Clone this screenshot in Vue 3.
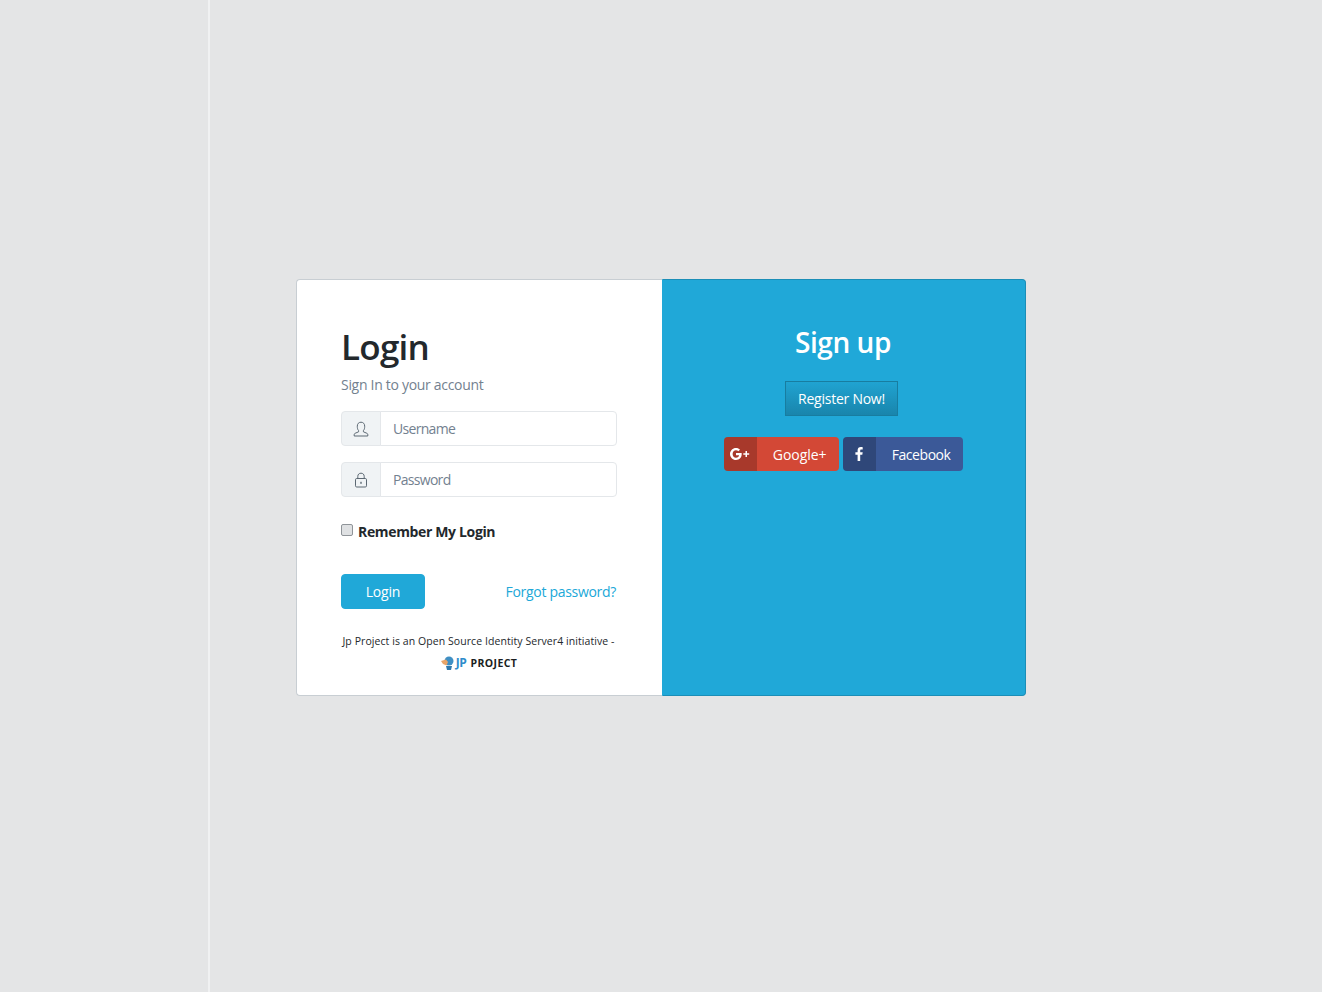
<script setup>
const footerText = 'Jp Project is an Open Source Identity Server4 initiative -'
</script>

<template>
  <div class="page">
    <div class="side-line"></div>
    <div class="card-group">
      <div class="card login-card">
        <h1>Login</h1>
        <p class="muted">Sign In to your account</p>
        <div class="input-group">
          <span class="addon">
            <svg width="16" height="16" viewBox="0 0 16 16" fill="none" stroke="#5c6873" stroke-width="1">
              <path d="M5.6 9.6C4.6 8.6 4.3 7 4.3 5.2 4.3 2.8 5.7 1.2 8 1.2s3.700 1.600 3.700 4c0 1.800-.3 3.400-1.300 4.400v1.200l3.500 1.500c.6.3.9.7.9 1.300v1.400H1.200v-1.400c0-.6.3-1 .9-1.300l3.500-1.500z" />
            </svg>
          </span>
          <input type="text" placeholder="Username" />
        </div>
        <div class="input-group">
          <span class="addon">
            <svg width="16" height="16" viewBox="0 0 16 16" fill="none" stroke="#5c6873" stroke-width="1">
              <rect x="2.500" y="6.500" width="11" height="8.500" rx="1.200" />
              <path d="M4.800 6.500V4.400C4.800 2.400 6.100 1.200 8 1.200s3.200 1.200 3.200 3.200v2.100" />
              <rect x="7.300" y="9.800" width="1.400" height="2" fill="#5c6873" stroke="none" />
            </svg>
          </span>
          <input type="password" placeholder="Password" />
        </div>
        <label class="remember">
          <input type="checkbox" />
          <strong>Remember My Login</strong>
        </label>
        <div class="actions">
          <button class="btn-login">Login</button>
          <a class="forgot">Forgot password?</a>
        </div>
        <div class="credit">
          <span class="credit-text">{{ footerText }}</span>
          <div class="logo">
            <svg width="15" height="14" viewBox="0 0 15 14">
              <circle cx="9" cy="5" r="4.500" fill="#3f8fc4" />
              <path d="M6 10h6l-1 4H7z" fill="#2f78ad" />
              <path d="M1 5l5-1.500 2 2.500-1.500 3.500-3.500-1.500z" fill="#e8a468" />
            </svg>
            <span class="jp">JP</span>
            <span class="project">PROJECT</span>
          </div>
        </div>
      </div>
      <div class="card signup-card">
        <h2>Sign up</h2>
        <button class="btn-register">Register Now!</button>
        <div class="socials">
          <button class="social google">
            <span class="social-icon">
              <svg width="20" height="12" viewBox="0 0 20 12" fill="#fff">
                <path d="M6 5v2.200h3.100C8.900 8.400 7.800 9.800 6 9.800 4.100 9.800 2.600 8.200 2.600 6.100S4.100 2.300 6 2.300c1 0 1.800.4 2.300 1l1.700-1.600C9 .7 7.600 0 6 0 2.700 0 0 2.700 0 6s2.700 6 6 6c3.400 0 5.700-2.400 5.700-5.900 0-.4 0-.8-.1-1.100z" />
                <path d="M15.500 3h1.500v2.200h2.200v1.500H17v2.200h-1.500V6.700h-2.200V5.200h2.200z" />
              </svg>
            </span>
            <span class="social-label">Google+</span>
          </button>
          <button class="social facebook">
            <span class="social-icon">
              <svg width="8" height="14" viewBox="0 0 8 14" fill="#fff">
                <path d="M5.200 14V7.800h2.100l.4-2.500H5.200V3.700c0-.7.2-1.200 1.200-1.200h1.300V.2C7.400.1 6.700 0 5.800 0 3.900 0 2.600 1.200 2.600 3.300v2H.4v2.500h2.200V14z" />
              </svg>
            </span>
            <span class="social-label">Facebook</span>
          </button>
        </div>
      </div>
    </div>
  </div>
</template>

<style>
html, body {
  margin: 0;
  background: #e4e5e6;
}
</style>

<style scoped>
.page {
  position: relative;
  height: 975px;
  padding-bottom: 17px;
  display: flex;
  align-items: center;
  justify-content: center;
  font-family: "Open Sans", "Noto Sans", sans-serif;
  font-size: 14px;
  color: #23282c;
}

.side-line {
  position: absolute;
  left: 208px;
  top: 0;
  width: 2px;
  height: 992px;
  background: #f0f1f2;
}

.card-group {
  display: flex;
  width: 730px;
  height: 417px;
  position: relative;
}

.card {
  box-sizing: border-box;
  border: 1px solid #c8ced3;
}

.login-card {
  width: 366px;
  padding: 45px 46px 0 44px;
  background: #fff;
  border-right: 0;
  border-radius: 4px 0 0 4px;
}

h1 {
  margin: 0;
  font-size: 35px;
  line-height: 44px;
  font-weight: 600;
  letter-spacing: -0.75px;
}

.muted {
  margin: 5px 0 16px;
  font-size: 14px;
  line-height: 21px;
  letter-spacing: -0.3px;
  color: #73818f;
}

.input-group {
  display: flex;
  width: 276px;
  height: 35px;
  margin-bottom: 16px;
}

.addon {
  box-sizing: border-box;
  flex: none;
  width: 40px;
  display: flex;
  align-items: center;
  justify-content: center;
  background: #f0f3f5;
  border: 1px solid #e4e7ea;
  border-radius: 4px 0 0 4px;
}

.input-group input {
  box-sizing: border-box;
  flex: 1;
  min-width: 0;
  margin-left: -1px;
  padding: 0 12px;
  border: 1px solid #e4e7ea;
  border-radius: 0 4px 4px 0;
  font: inherit;
  font-size: 14px;
  letter-spacing: -0.7px;
  outline: none;
}

.input-group input::placeholder {
  color: #73818f;
  opacity: 1;
}

.remember {
  display: flex;
  align-items: flex-start;
  margin-top: 23px;
  height: 21px;
}

.remember input {
  appearance: none;
  box-sizing: border-box;
  width: 12px;
  height: 12px;
  margin: 4px 5px 0 0;
  background: #dfe1e3;
  border: 1px solid #8f9499;
  border-radius: 2px;
}

.remember strong {
  line-height: 21px;
  margin-top: 1px;
  font-weight: 700;
  letter-spacing: -0.35px;
}

.actions {
  display: flex;
  align-items: center;
  justify-content: space-between;
  margin-top: 33px;
}

.btn-login {
  width: 84px;
  height: 35px;
  border: 1px solid #20a8d8;
  border-radius: 4px;
  background: #20a8d8;
  color: #fff;
  font: inherit;
  letter-spacing: -0.2px;
}

.forgot {
  color: #20a8d8;
  letter-spacing: -0.3px;
}

.credit {
  margin-top: 22px;
  text-align: center;
  font-size: 10.500px;
  line-height: 20px;
  white-space: nowrap;
}

.credit-text {
  letter-spacing: 0.07px;
}

.logo {
  display: flex;
  align-items: center;
  justify-content: center;
  gap: 1px;
  height: 14px;
  margin-top: 5px;
}

.jp {
  color: #2f8ccb;
  font-weight: 700;
  font-size: 12px;
  letter-spacing: -0.4px;
  margin-right: 3px;
}

.project {
  font-weight: 700;
  font-size: 10.500px;
  letter-spacing: 0.4px;
  color: #1b1e21;
}

.signup-card {
  width: 364px;
  padding-top: 40px;
  display: flex;
  flex-direction: column;
  align-items: center;
  background: #20a8d8;
  border-color: #1b8eb7;
  border-left-color: #20a8d8;
  border-radius: 0 4px 4px 0;
  color: #fff;
}

h2 {
  margin: 0 0 0 -2px;
  font-size: 28px;
  line-height: 44px;
  font-weight: 600;
  letter-spacing: -0.45px;
}

.btn-register {
  width: 113px;
  height: 35px;
  margin-top: 17px;
  margin-left: -5px;
  border: 1px solid #187da0;
  border-radius: 0;
  background: linear-gradient(#20a3d1, #1985ac);
  color: #fff;
  font: inherit;
  letter-spacing: -0.25px;
}

.socials {
  display: flex;
  gap: 4px;
  margin-top: 21px;
  margin-left: -2px;
}

.social {
  display: flex;
  height: 34px;
  padding: 0;
  border: 0;
  border-radius: 4px;
  overflow: hidden;
  color: #fff;
  font: inherit;
}

.social-icon {
  width: 33px;
  height: 100%;
  display: flex;
  align-items: center;
  justify-content: center;
  background: rgba(0, 0, 0, 0.2);
}

.social-label {
  flex: 1;
  align-self: center;
  text-align: right;
  padding-right: 12px;
}

.google {
  width: 115px;
  background: #d34836;
  letter-spacing: -0.05px;
}

.facebook {
  width: 120px;
  background: #3b5998;
  letter-spacing: -0.45px;
}
</style>
